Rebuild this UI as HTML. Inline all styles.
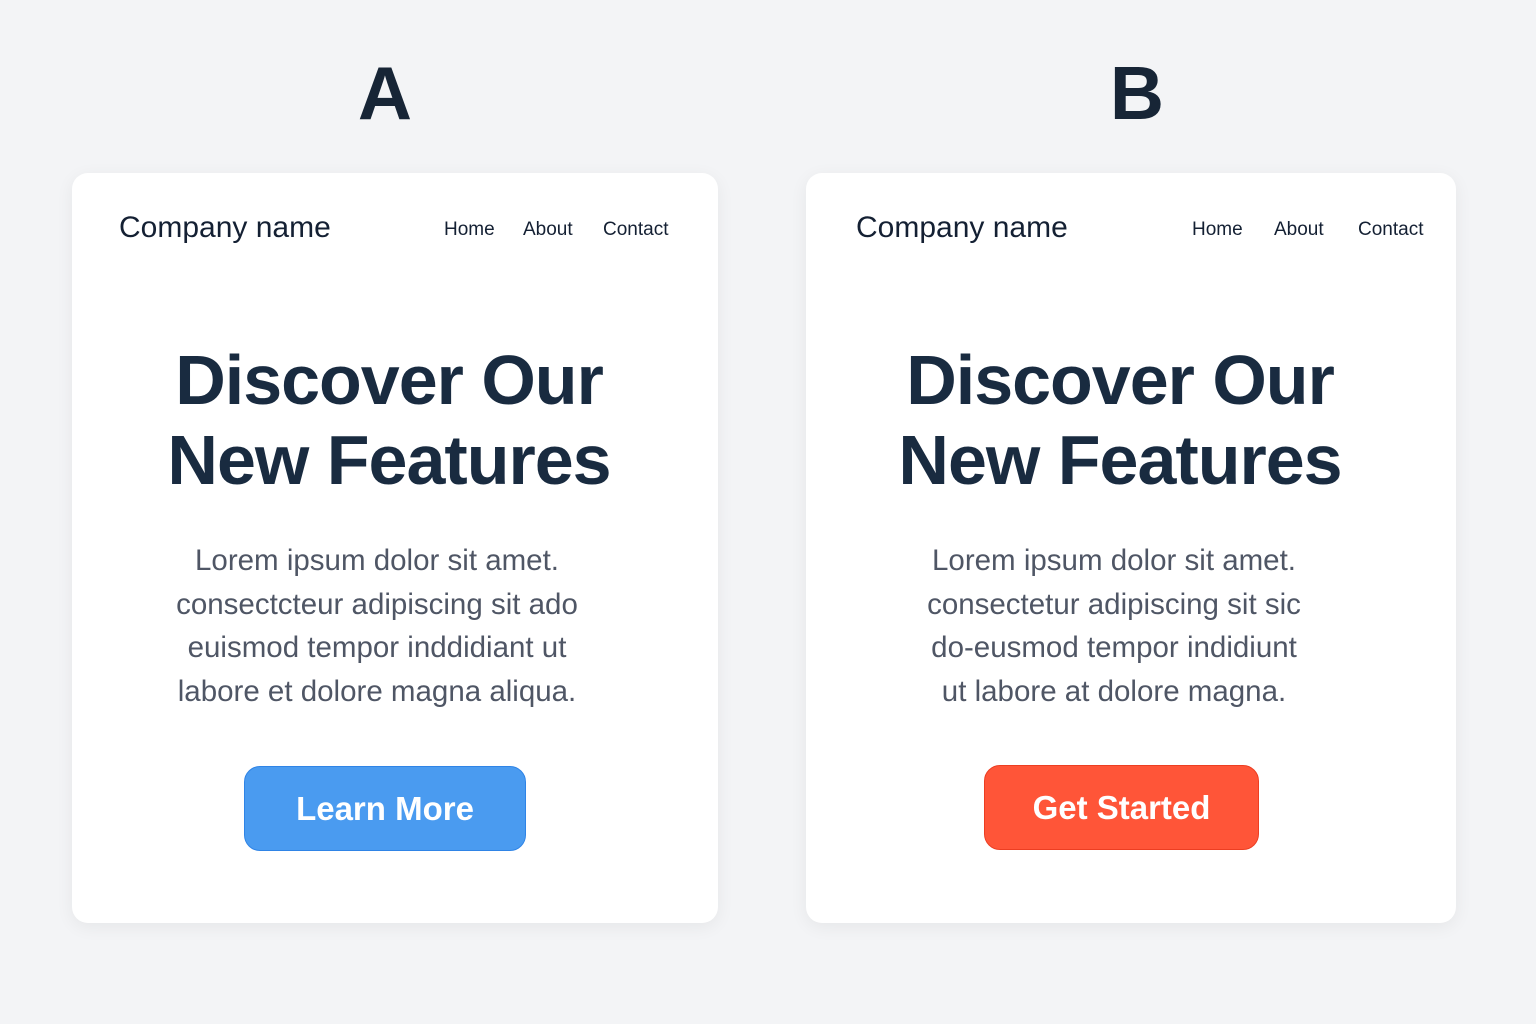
<!DOCTYPE html>
<html><head><meta charset="utf-8"><style>
*{margin:0;padding:0;box-sizing:border-box}
body{width:1536px;height:1024px;background:#f3f4f6;font-family:"Liberation Sans",sans-serif;position:relative;overflow:hidden;color:#1b2a3b}
.lbl{position:absolute;top:50px;font-size:75px;font-weight:bold;width:200px;text-align:center;color:#172536}
.card{position:absolute;top:173px;height:750px;background:#fff;border-radius:16px;box-shadow:0 4px 18px rgba(0,0,0,0.06)}
.brand{position:absolute;top:211px;font-size:30px;color:#142033}
.nav{position:absolute;top:219px;font-size:19px;color:#142033}
.h{position:absolute;top:340px;text-align:center;font-size:70px;font-weight:bold;line-height:80px;color:#192b40;letter-spacing:-1px}
.p{position:absolute;top:539px;text-align:center;font-size:29.5px;line-height:43.5px;color:#4f5665}
.btn{position:absolute;border-radius:16px;color:#fff;font-size:33px;font-weight:bold;text-align:center}
</style></head><body>
<div class="lbl" style="left:285px">A</div>
<div class="lbl" style="left:1037px">B</div>

<div class="card" style="left:72px;width:646px"></div>
<div class="brand" style="left:119px">Company name</div>
<div class="nav" style="left:444px">Home</div>
<div class="nav" style="left:523px">About</div>
<div class="nav" style="left:603px">Contact</div>
<div class="h" style="left:89px;width:600px">Discover Our<br>New Features</div>
<div class="p" style="left:92px;width:570px">Lorem ipsum dolor sit amet.<br>consectcteur adipiscing sit ado<br>euismod tempor inddidiant ut<br>labore et dolore magna aliqua.</div>
<div class="btn" style="left:244px;top:766px;width:282px;height:85px;line-height:83px;background:#4a9bf0;border:1px solid #2f84e6">Learn More</div>

<div class="card" style="left:806px;width:650px"></div>
<div class="brand" style="left:856px">Company name</div>
<div class="nav" style="left:1192px">Home</div>
<div class="nav" style="left:1274px">About</div>
<div class="nav" style="left:1358px">Contact</div>
<div class="h" style="left:820px;width:600px">Discover Our<br>New Features</div>
<div class="p" style="left:829px;width:570px">Lorem ipsum dolor sit amet.<br>consectetur adipiscing sit sic<br>do-eusmod tempor indidiunt<br>ut labore at dolore magna.</div>
<div class="btn" style="left:984px;top:765px;width:275px;height:85px;line-height:83px;background:#ff5538;border:1px solid #ec3e22">Get Started</div>
</body></html>
